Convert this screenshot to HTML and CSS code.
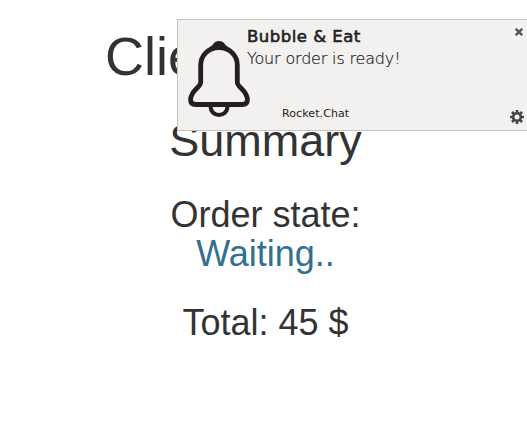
FILE: index.html
```html
<!DOCTYPE html>
<html lang="en">
<head>
<meta charset="utf-8">
<title>Order summary</title>
<link rel="stylesheet" href="styles.css">
</head>
<body>
<main class="order">
  <h1 class="title">Clie</h1>
  <h2 class="summary">Summary</h2>
  <p class="state">Order state:<br><span class="status">Waiting..</span></p>
  <p class="total">Total: 45 $</p>
</main>
<aside class="toast">
  <svg class="bell" viewBox="0 0 62 78" fill="none" stroke="#231f20" stroke-width="4.8">
    <path d="M22.5 66C22.5 78 39.5 78 39.5 66" stroke-width="4"/>
    <path d="M31 7.500C20 7.500 12.7 16 12.7 25V42C12.7 48 2.6 50 2.6 60Q2.6 64.500 7.6 64.500H54.4Q59.4 64.500 59.4 60C59.4 50 49.3 48 49.3 42V25C49.3 16 42 7.500 31 7.500Z" stroke-linejoin="round"/>
    <path d="M21 8Q25 5 26 3C28 .2 34 .2 36 3Q37 5 41 8Z" fill="#231f20" stroke="none"/>
  </svg>
  <div class="message">
    <strong class="heading">Bubble &amp; Eat</strong>
    <span class="text">Your order is ready!</span>
    <small class="source">Rocket.Chat</small>
  </div>
  <div class="actions">
    <svg class="close" viewBox="0 0 8 8" stroke="#555553" stroke-width="2.4"><path d="M.8 .8L7.200 7.200M7.200 .8L.8 7.200"/></svg>
    <svg class="gear" viewBox="0 0 14 14" fill="none" stroke="#454543"><circle cx="7" cy="7" r="3.800" stroke-width="2.600"/><path stroke-width="2.600" d="M7 0v3M7 11v3M0 7h3M11 7h3M2 2l2 2M10 10l2 2M12 2l-2 2M4 10l-2 2"/></svg>
  </div>
</aside>
</body>
</html>
```

FILE: styles.css
```css
body {
  margin: 0;
  overflow: hidden;
  background: #fff;
  color: #333;
  font-family: "Liberation Sans", Arial, sans-serif;
}
.order { padding-top: 26px; text-align: center; width: 531px; height: 397px; box-sizing: border-box; }
h1, h2, p { margin: 0; font-weight: 400; }
.title { font-size: 54px; line-height: 60px; padding-left: 105px; text-align: left; }
.summary { font-size: 45px; line-height: 50px; margin-top: 30px; }
.state { font-size: 36px; line-height: 39px; margin-top: 29px; }
.status { color: #31708f; }
.total { font-size: 36px; line-height: 39px; margin-top: 30px; }
.toast {
  position: absolute;
  left: 177px;
  top: 19px;
  width: 350px;
  height: 112px;
  box-sizing: border-box;
  border: 1px solid #c6c4bf;
  border-right: 0;
  background: #f2f1ef;
  color: #222220;
  display: flex;
  padding-left: 10px;
  font-family: "DejaVu Sans", sans-serif;
}
.bell { width: 62px; height: 78px; margin-top: 20px; flex: none; }
.message { display: flex; flex-direction: column; flex: 1; margin-left: -3px; padding-top: 6px; }
.heading { font-size: 16.5px; line-height: 22px; font-weight: 400; letter-spacing: 0.5px; -webkit-text-stroke: 0.6px #222220; }
.text { font-size: 16px; line-height: 22px; font-weight: 200; letter-spacing: -0.17px; -webkit-text-stroke: 0.2px #222220; }
.source { font-size: 11px; line-height: 14px; margin: 37px 0 0 35px; letter-spacing: 0.1px; }
.actions { display: flex; flex-direction: column; justify-content: space-between; align-items: center; padding: 8px 3px 6px 0; }
.close { width: 8px; height: 8px; margin-left: 4px; }
.gear { width: 14px; height: 14px; }
```
